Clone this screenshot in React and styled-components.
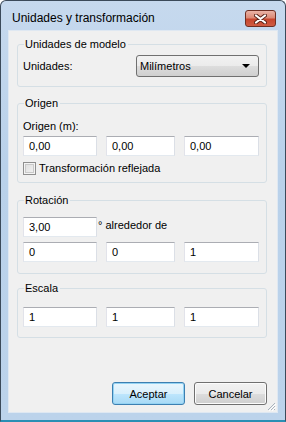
import styled, { createGlobalStyle } from "styled-components";

const GlobalStyle = createGlobalStyle`
  body {
    margin: 0;
    background: #fff;
    font-family: "Liberation Sans", Arial, sans-serif;
  }
`;

const Window = styled.div`
  width: 286px;
  height: 422px;
  box-sizing: border-box;
  display: flex;
  flex-direction: column;
  padding: 0 7px 7px 7px;
  border: 1px solid #3b4a5a;
  border-bottom: 2px solid #2a8fb4;
  border-radius: 6px 6px 0 0;
  background: linear-gradient(180deg, #c6d9ee 0%, #b9d1ea 40%, #bcd3eb 100%);
`;

const TitleBar = styled.div`
  height: 29px;
  display: flex;
  justify-content: space-between;
  padding: 0 2px 0 4px;
`;

const Title = styled.div`
  font-size: 12px;
  line-height: 29px;
  padding-top: 3px;
  color: #000;
`;

const CloseButton = styled.div`
  margin-top: 9px;
  width: 31px;
  height: 17px;
  box-sizing: border-box;
  border: 1px solid #6e2e22;
  border-radius: 3px;
  background: linear-gradient(180deg, #eab3a6 0%, #dc8a76 45%, #c7452d 55%, #cf5c43 100%);
  display: flex;
  align-items: center;
  justify-content: center;
`;

const Client = styled.div`
  position: relative;
  flex: 1;
  display: flex;
  flex-direction: column;
  background: #f0f0f0;
  border: 1px solid #dfe8f2;
  padding: 0 10px 7px 8px;
  font-size: 11px;
  color: #000;
`;

const Group = styled.fieldset`
  margin: ${(p) => p.$mt}px 0 0 0;
  padding: ${(p) => p.$pt}px 7px ${(p) => p.$pb}px 5px;
  border: 1px solid #d5dfe5;
  border-radius: 3px;
  display: flex;
  flex-direction: column;
  min-width: 0;
`;

const Legend = styled.legend`
  padding: 0 2px 0 1px;
  margin-left: 1px;
  line-height: 14px;
`;

const UnitRow = styled.div`
  display: flex;
  align-items: center;
  justify-content: space-between;
`;

const Label = styled.div`
  line-height: 14px;
  margin-bottom: ${(p) => p.$mb || 0}px;
`;

const Select = styled.div`
  width: 123px;
  height: 22px;
  box-sizing: border-box;
  border: 1px solid #707070;
  border-radius: 3px;
  background: linear-gradient(180deg, #f2f2f2 0%, #ebebeb 50%, #dddddd 51%, #cfcfcf 100%);
  display: flex;
  align-items: center;
  justify-content: space-between;
  padding: 0 8px 0 3px;
`;

const Arrow = styled.span`
  width: 0;
  height: 0;
  border-left: 4px solid transparent;
  border-right: 4px solid transparent;
  border-top: 4px solid #000;
`;

const FieldRow = styled.div`
  display: grid;
  grid-template-columns: 74px 69px 1fr;
  column-gap: 9px;
  margin-top: ${(p) => p.$mt || 0}px;
`;

const Input = styled.div`
  height: 20px;
  box-sizing: border-box;
  border: 1px solid;
  border-color: #abadb3 #dbdfe6 #e3e9ef #e2e3ea;
  background: #fff;
  padding: 0 5px;
  line-height: 18px;
`;

const CheckRow = styled.label`
  display: flex;
  align-items: center;
  gap: 3px;
  margin-top: 6px;
  line-height: 13px;
`;

const CheckBox = styled.span`
  width: 13px;
  height: 13px;
  box-sizing: border-box;
  border: 1px solid #8f8f8f;
  background: linear-gradient(135deg, #dcdcdc 0%, #f4f4f4 100%);
  box-shadow: inset 0 0 0 1px #f4f4f4, inset 0 0 0 2px #c9c9c9;
`;

const RotRow = styled.div`
  display: flex;
  align-items: flex-start;
`;

const RotInput = styled(Input)`
  width: 74px;
`;

const RotText = styled.span`
  line-height: 14px;
  margin-top: 1px;
  padding-left: 1px;
`;

const Buttons = styled.div`
  margin-top: auto;
  display: flex;
  justify-content: flex-end;
  gap: 9px;
`;

const Button = styled.div`
  width: 73px;
  height: 23px;
  box-sizing: border-box;
  border: 1px solid ${(p) => (p.$primary ? "#3c7fb1" : "#707070")};
  border-radius: 3px;
  background: ${(p) =>
    p.$primary
      ? "linear-gradient(180deg, #eaf6fd 0%, #d9f0fc 50%, #bee6fd 51%, #a7d9f5 100%)"
      : "linear-gradient(180deg, #f2f2f2 0%, #ebebeb 50%, #dddddd 51%, #cfcfcf 100%)"};
  box-shadow: inset 0 0 0 1px ${(p) => (p.$primary ? "#94d3f3" : "#fcfcfc")};
  display: flex;
  align-items: center;
  justify-content: center;
`;

const Grip = styled.svg`
  position: absolute;
  right: 1px;
  bottom: 1px;
`;

export default function App() {
  return (
    <>
      <GlobalStyle />
      <Window>
        <TitleBar>
          <Title>Unidades y transformación</Title>
          <CloseButton>
            <svg width="13" height="10" viewBox="0 0 13 10">
              <path d="M2 1.5 L11 8.5 M11 1.5 L2 8.5" stroke="#5a2318" strokeWidth="4" strokeLinecap="round" />
              <path d="M2 1.5 L11 8.5 M11 1.5 L2 8.5" stroke="#fff" strokeWidth="2.2" strokeLinecap="round" />
            </svg>
          </CloseButton>
        </TitleBar>
        <Client>
          <Group $mt={6} $pt={4} $pb={9}>
            <Legend>Unidades de modelo</Legend>
            <UnitRow>
              <Label>Unidades:</Label>
              <Select>
                <span>Milímetros</span>
                <Arrow />
              </Select>
            </UnitRow>
          </Group>

          <Group $mt={9} $pt={9} $pb={7}>
            <Legend>Origen</Legend>
            <Label $mb={3}>Origen (m):</Label>
            <FieldRow>
              <Input>0,00</Input>
              <Input>0,00</Input>
              <Input>0,00</Input>
            </FieldRow>
            <CheckRow>
              <CheckBox />
              Transformación reflejada
            </CheckRow>
          </Group>

          <Group $mt={10} $pt={10} $pb={11}>
            <Legend>Rotación</Legend>
            <RotRow>
              <RotInput>3,00</RotInput>
              <RotText>° alrededor de</RotText>
            </RotRow>
            <FieldRow $mt={5}>
              <Input>0</Input>
              <Input>0</Input>
              <Input>1</Input>
            </FieldRow>
          </Group>

          <Group $mt={7} $pt={12} $pb={10}>
            <Legend>Escala</Legend>
            <FieldRow>
              <Input>1</Input>
              <Input>1</Input>
              <Input>1</Input>
            </FieldRow>
          </Group>

          <Buttons>
            <Button $primary>Aceptar</Button>
            <Button>Cancelar</Button>
          </Buttons>
          <Grip width="10" height="10" viewBox="0 0 10 10">
            <path d="M9 2 L2 9 M9 5 L5 9 M9 8 L8 9" stroke="#a9b3bd" strokeWidth="1" />
            <path d="M10 3 L3 10 M10 6 L6 10" stroke="#fff" strokeWidth="1" />
          </Grip>
        </Client>
      </Window>
    </>
  );
}
